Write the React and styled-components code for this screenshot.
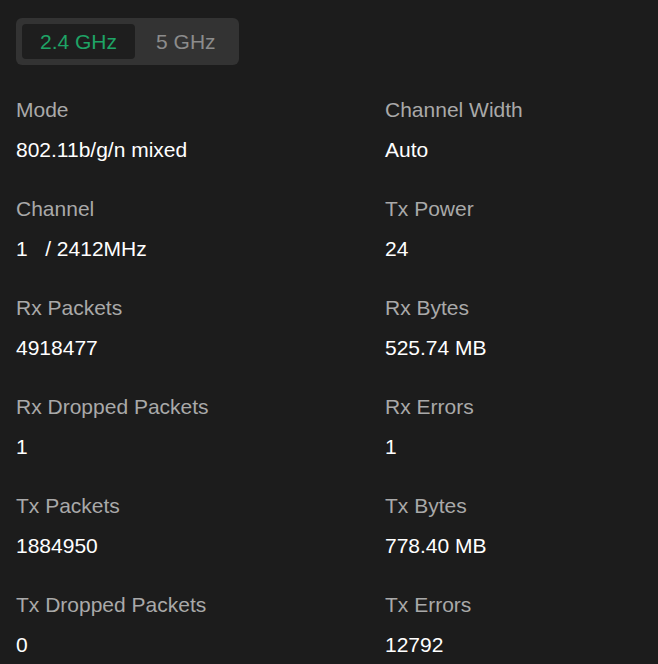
import React, { useState } from 'react'
import styled, { createGlobalStyle } from 'styled-components'

const GlobalStyle = createGlobalStyle`
  html, body {
    margin: 0;
    padding: 0;
    background: #1c1c1c;
  }
  body {
    font-family: "Liberation Sans", Arial, sans-serif;
  }
`

const fields = [
  { label: 'Mode', value: '802.11b/g/n mixed' },
  { label: 'Channel Width', value: 'Auto' },
  { label: 'Channel', value: '1   / 2412MHz' },
  { label: 'Tx Power', value: '24' },
  { label: 'Rx Packets', value: '4918477' },
  { label: 'Rx Bytes', value: '525.74 MB' },
  { label: 'Rx Dropped Packets', value: '1' },
  { label: 'Rx Errors', value: '1' },
  { label: 'Tx Packets', value: '1884950' },
  { label: 'Tx Bytes', value: '778.40 MB' },
  { label: 'Tx Dropped Packets', value: '0' },
  { label: 'Tx Errors', value: '12792' },
]

const App = () => {
  const [band, setBand] = useState('2.4')

  return (
    <Wrap>
      <GlobalStyle />
      <Tabs>
        <Tab active={band === '2.4'} onClick={() => setBand('2.4')}>2.4 GHz</Tab>
        <Tab active={band === '5'} onClick={() => setBand('5')}>5 GHz</Tab>
      </Tabs>
      <Grid>
        {fields.map((f) => (
          <Field key={f.label}>
            <Label>{f.label}</Label>
            <Value>{f.value}</Value>
          </Field>
        ))}
      </Grid>
    </Wrap>
  )
}

const Wrap = styled.div`
  padding: 18px 16px 0;
  background: #1c1c1c;
  min-height: 100vh;
  box-sizing: border-box;
`

const Tabs = styled.div`
  display: inline-flex;
  gap: 3px;
  padding: 6px 5px 6px 6px;
  height: 47px;
  box-sizing: border-box;
  background: #333333;
  border-radius: 6px;
`

const Tab = styled.div.withConfig({ shouldForwardProp: (p) => p !== 'active' })`
  display: flex;
  align-items: center;
  padding: 0 18px;
  border-radius: 4px;
  font-size: 21px;
  cursor: pointer;
  color: ${(p) => (p.active ? '#1ea466' : '#8c8c8c')};
  background: ${(p) => (p.active ? '#1e1e1e' : 'transparent')};
`

const Grid = styled.div`
  display: grid;
  grid-template-columns: 369px 1fr;
  row-gap: 35px;
  margin-top: 33px;
`

const Field = styled.div`
  display: flex;
  flex-direction: column;
  gap: 16px;
`

const Label = styled.div`
  font-size: 21px;
  line-height: 24px;
  color: #a9a9a9;
`

const Value = styled.div`
  font-size: 21px;
  line-height: 24px;
  color: #ffffff;
  white-space: pre;
`

export default App
